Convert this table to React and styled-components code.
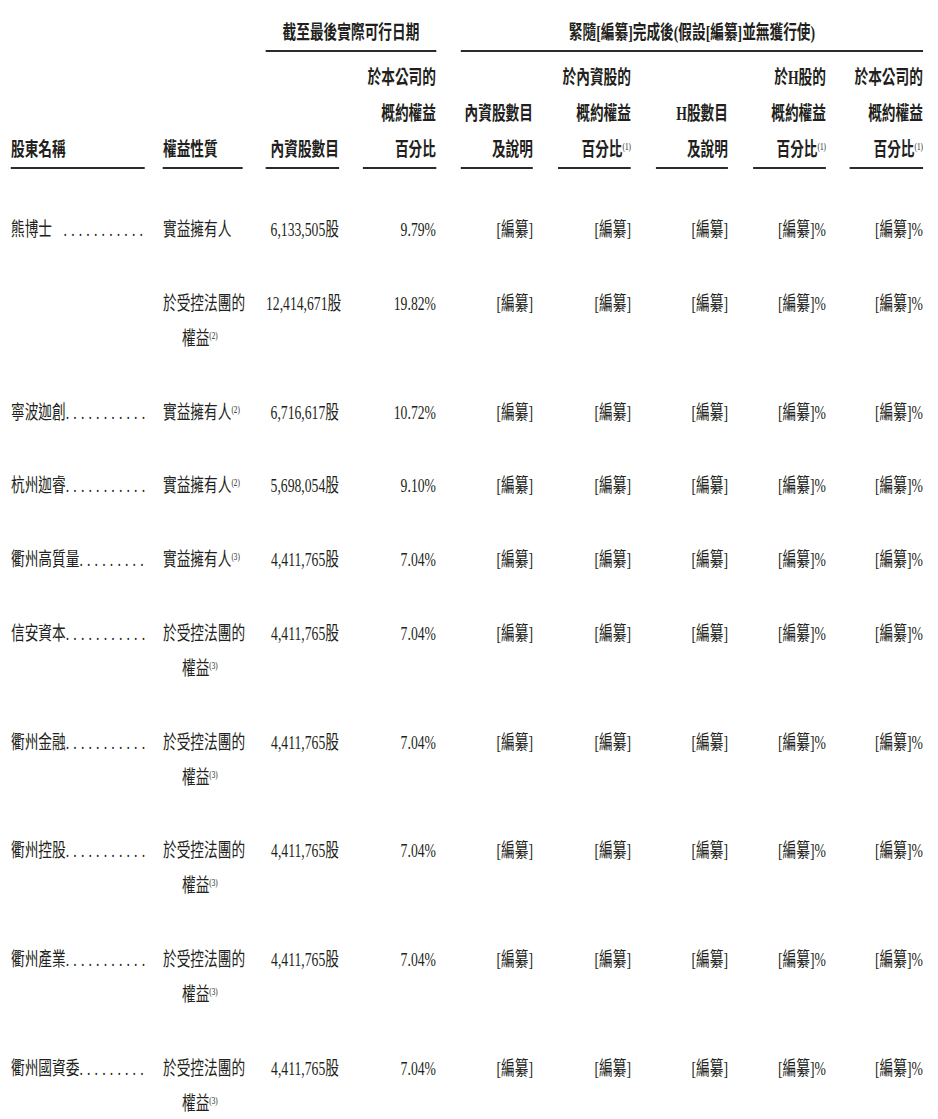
import React from 'react';
import styled, { createGlobalStyle } from 'styled-components';

// 原圖文字是橫向壓窄的，整張表以 layout 寬度排好後再 scaleX 壓回 938px
const S = 0.72;
const px = v => `${v / S}px`;
const LINE = 35;
const ROW_GAP = 38.75;

const COLS = [
  { w: 134, ml: 0, a: 'left' },
  { w: 80, ml: 18, a: 'left' },
  { w: 73, ml: 23, a: 'right' },
  { w: 73, ml: 24, a: 'right' },
  { w: 72, ml: 25, a: 'right' },
  { w: 73, ml: 25, a: 'right' },
  { w: 72, ml: 25, a: 'right' },
  { w: 73, ml: 25, a: 'right' },
  { w: 73, ml: 24, a: 'right' },
];

const RED = '[編纂]';
const TAIL = [RED, RED, RED, RED + '%', RED + '%'];

const rows = [
  { name: '熊博士', dots: 11, nature: ['實益擁有人'], shares: '6,133,505股', pct: '9.79%' },
  { name: '', nature: ['於受控法團的', '權益'], note: '2', shares: '12,414,671股', pct: '19.82%' },
  { name: '寧波迦創', dots: 11, nature: ['實益擁有人'], note: '2', shares: '6,716,617股', pct: '10.72%' },
  { name: '杭州迦睿', dots: 11, nature: ['實益擁有人'], note: '2', shares: '5,698,054股', pct: '9.10%' },
  { name: '衢州高質量', dots: 9, nature: ['實益擁有人'], note: '3', shares: '4,411,765股', pct: '7.04%' },
  { name: '信安資本', dots: 11, nature: ['於受控法團的', '權益'], note: '3', shares: '4,411,765股', pct: '7.04%' },
  { name: '衢州金融', dots: 11, nature: ['於受控法團的', '權益'], note: '3', shares: '4,411,765股', pct: '7.04%' },
  { name: '衢州控股', dots: 11, nature: ['於受控法團的', '權益'], note: '3', shares: '4,411,765股', pct: '7.04%' },
  { name: '衢州產業', dots: 11, nature: ['於受控法團的', '權益'], note: '3', shares: '4,411,765股', pct: '7.04%' },
  { name: '衢州國資委', dots: 9, nature: ['於受控法團的', '權益'], note: '3', shares: '4,411,765股', pct: '7.04%' },
];

const heads = [
  ['股東名稱'],
  ['權益性質'],
  ['內資股數目'],
  ['於本公司的', '概約權益', '百分比'],
  ['內資股數目', '及說明'],
  ['於內資股的', '概約權益', ['百分比', '1']],
  ['H股數目', '及說明'],
  ['於H股的', '概約權益', ['百分比', '1']],
  ['於本公司的', '概約權益', ['百分比', '1']],
];

const App = () => {
  return (
    <>
      <GlobalStyle />
      <Frame>
        <Page>
          <GroupRow>
            <GroupSpacer />
            <GroupCell $w={170} $ml={23}>截至最後實際可行日期</GroupCell>
            <GroupCell $w={462} $ml={25}>緊隨[編纂]完成後(假設[編纂]並無獲行使)</GroupCell>
          </GroupRow>

          <HeadRow>
            {heads.map((lines, i) => (
              <HeadCell key={i} $w={COLS[i].w} $ml={COLS[i].ml} $a={COLS[i].a}>
                {lines.map((l, j) => (
                  <HeadLine key={j}>
                    {Array.isArray(l) ? (
                      <>
                        {l[0]}
                        <Note>({l[1]})</Note>
                      </>
                    ) : (
                      l
                    )}
                  </HeadLine>
                ))}
              </HeadCell>
            ))}
          </HeadRow>

          <Body>
            {rows.map((r, i) => (
              <DataRow key={i} $lines={r.nature.length}>
                <Cell $w={COLS[0].w} $ml={0} $a="left">
                  {r.name && (
                    <NameLine>
                      <span>{r.name}</span>
                      <Leader>{'.'.repeat(r.dots)}</Leader>
                    </NameLine>
                  )}
                </Cell>
                <Cell $w={COLS[1].w} $ml={COLS[1].ml} $a="left">
                  {r.nature.map((n, k) => (
                    <NatureLine key={k} $indent={k > 0}>
                      {n}
                      {r.note && k === r.nature.length - 1 && <Note>({r.note})</Note>}
                    </NatureLine>
                  ))}
                </Cell>
                <Cell $w={COLS[2].w} $ml={COLS[2].ml} $a="right">
                  {r.shares}
                </Cell>
                <Cell $w={COLS[3].w} $ml={COLS[3].ml} $a="right">
                  {r.pct}
                </Cell>
                {TAIL.map((t, k) => (
                  <Cell key={k} $w={COLS[k + 4].w} $ml={COLS[k + 4].ml} $a="right">
                    {t}
                  </Cell>
                ))}
              </DataRow>
            ))}
          </Body>
        </Page>
      </Frame>
    </>
  );
};

const GlobalStyle = createGlobalStyle`
  html, body {
    margin: 0;
    padding: 0;
    background: #fff;
    overflow: hidden;
  }
`;

const Frame = styled.div`
  width: 938px;
  height: 1119px;
  overflow: hidden;
  background: #fff;
`;

const Page = styled.div`
  width: ${px(938)};
  box-sizing: border-box;
  padding: 16px 0 0 ${px(11)};
  transform: scaleX(${S});
  transform-origin: 0 0;
  font-family: 'Liberation Serif', 'Noto Sans CJK TC', serif;
  font-size: 19px;
  color: #231f20;
`;

const GroupRow = styled.div`
  display: flex;
`;

const GroupSpacer = styled.div`
  width: ${px(232)};
  flex: none;
`;

const GroupCell = styled.div`
  flex: none;
  width: ${({ $w }) => px($w)};
  margin-left: ${({ $ml }) => px($ml)};
  height: 34px;
  line-height: 34px;
  text-align: center;
  font-weight: bold;
  border-bottom: 2px solid #2b2b2b;
  white-space: nowrap;
`;

const HeadRow = styled.div`
  display: flex;
  align-items: flex-end;
  margin-top: 7px;
`;

const Col = styled.div`
  flex: none;
  box-sizing: border-box;
  width: ${({ $w }) => px($w)};
  margin-left: ${({ $ml }) => px($ml)};
  text-align: ${({ $a }) => $a};
  white-space: nowrap;
`;

const HeadCell = styled(Col)`
  font-weight: bold;
  border-bottom: 2px solid #2b2b2b;
`;

const HeadLine = styled.div`
  height: 36px;
  line-height: 37px;
`;

const Body = styled.div`
  margin-top: 43px;
`;

const DataRow = styled.div`
  display: flex;
  align-items: flex-start;
  height: ${({ $lines }) => $lines * LINE + ROW_GAP}px;
`;

const Cell = styled(Col)`
  height: ${LINE}px;
  line-height: ${LINE}px;
`;

const NameLine = styled.div`
  display: flex;
  height: ${LINE}px;
`;

const Leader = styled.span`
  flex: 1;
  text-align: right;
  letter-spacing: 5.8px;
  margin-right: -3px;
`;

const NatureLine = styled.div`
  height: ${LINE}px;
  padding-left: ${({ $indent }) => ($indent ? px(19) : '0')};
`;

const Note = styled.span`
  font-size: 10px;
  line-height: 0;
  vertical-align: 6px;
  font-weight: normal;
  letter-spacing: 0;
`;

export default App;
